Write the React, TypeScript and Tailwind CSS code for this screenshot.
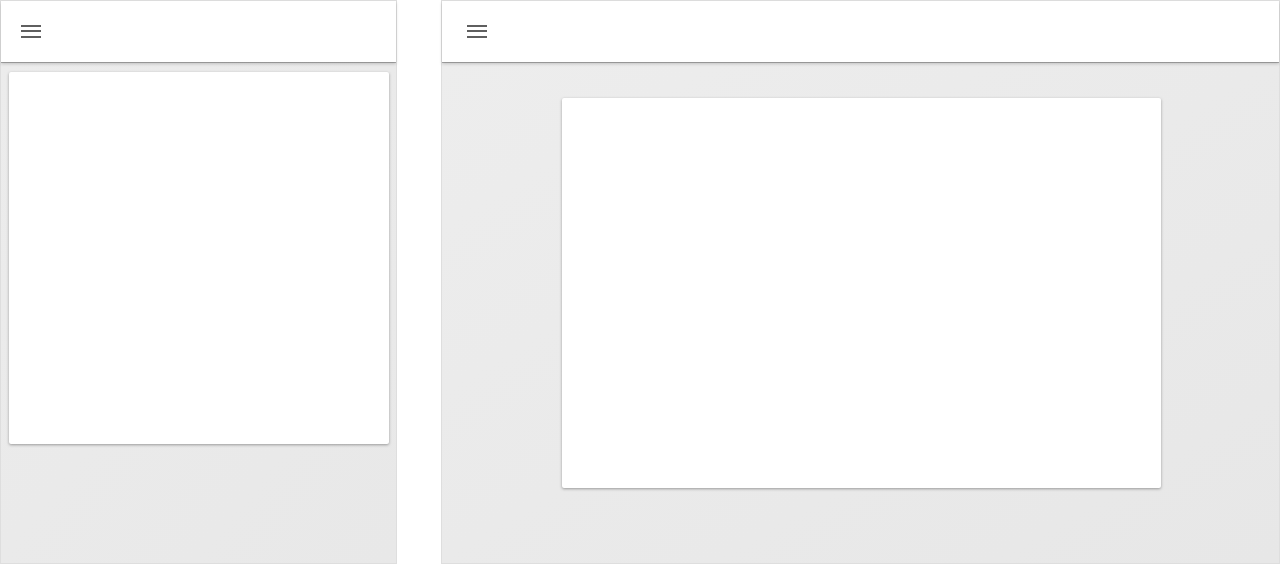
import React from "react";

function MenuIcon() {
  return (
    <svg width="20" height="14" viewBox="0 0 20 14" className="block">
      <rect x="0" y="0" width="20" height="2" fill="#5f5f5f" />
      <rect x="0" y="5" width="20" height="2" fill="#5f5f5f" />
      <rect x="0" y="11" width="20" height="2" fill="#5f5f5f" />
    </svg>
  );
}

function Header({ pad }: { pad: string }) {
  return (
    <div
      className={`relative z-10 flex h-[61px] shrink-0 items-center bg-white ${pad} shadow-[0_1px_0_rgba(0,0,0,0.25),0_2px_3px_rgba(0,0,0,0.18)]`}
    >
      <MenuIcon />
    </div>
  );
}

export default function App() {
  return (
    <div className="flex h-[564px] w-[1280px] bg-white" style={{ fontFamily: "Roboto, sans-serif" }}>
      {/* narrow layout */}
      <div className="flex h-full w-[397px] shrink-0 flex-col border border-[#dedede]">
        <Header pad="pl-[20px]" />
        <div className="flex-1 bg-gradient-to-br from-[#ececec] to-[#e8e8e8] px-[8px] pt-[10px]">
          <div className="h-[372px] w-[380px] rounded-[2px] bg-white shadow-[0_1px_3px_rgba(0,0,0,0.35)]" />
        </div>
      </div>

      <div className="w-[44px] shrink-0" />

      {/* wide layout */}
      <div className="flex h-full flex-1 flex-col border border-[#dedede]">
        <Header pad="pl-[25px]" />
        <div className="flex flex-1 bg-gradient-to-br from-[#ededed] to-[#e7e7e7] pl-[120px] pt-[36px]">
          <div className="h-[390px] w-[599px] rounded-[2px] bg-white shadow-[0_1px_3px_rgba(0,0,0,0.35)]" />
        </div>
      </div>
    </div>
  );
}
